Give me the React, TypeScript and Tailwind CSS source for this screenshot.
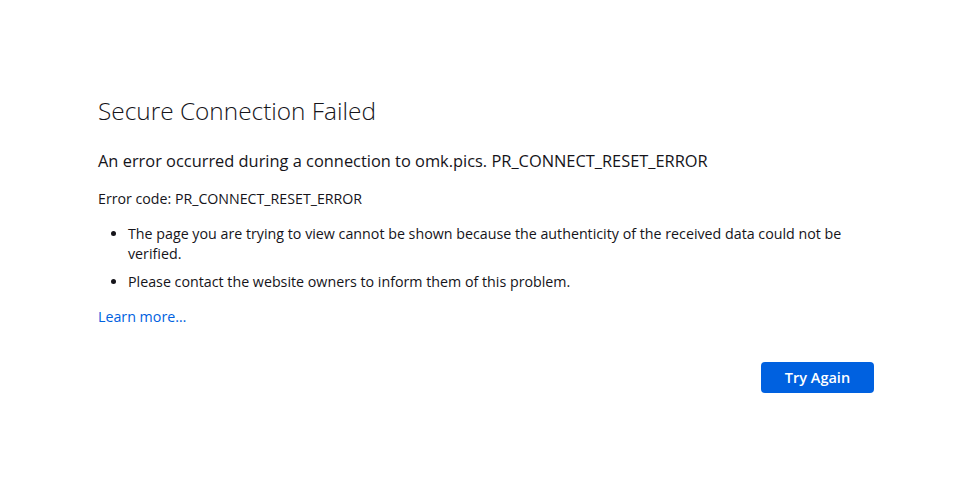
export default function App() {
  return (
    <div className="w-[963px] h-[492px] bg-white text-[#15141a] font-['Open_Sans',sans-serif] overflow-hidden">
      <div className="pl-[98px] pt-[94px] w-[874px]">
        <h1 className="text-[24.4px] font-light leading-[34px]">Secure Connection Failed</h1>
        <h2 className="mt-[22px] text-[16.4px] leading-[22px]">An error occurred during a connection to omk.pics. PR_CONNECT_RESET_ERROR</h2>
        <p className="mt-[17px] text-[14.2px] leading-[20px]">Error code: PR_CONNECT_RESET_ERROR</p>
        <ul className="mt-[15px] pl-[30px] list-disc text-[14.25px] leading-[20px]">
          <li>The page you are trying to view cannot be shown because the authenticity of the received data could not be verified.</li>
          <li className="mt-[8px]">Please contact the website owners to inform them of this problem.</li>
        </ul>
        <a className="block mt-[15px] text-[14.25px] leading-[20px] text-[#0061e0]" href="#">Learn more…</a>
        <div className="flex justify-end mt-[35px]">
          <button className="w-[113px] h-[31px] rounded-[4px] bg-[#0061e0] text-white text-[14.5px] font-semibold">Try Again</button>
        </div>
      </div>
    </div>
  );
}
